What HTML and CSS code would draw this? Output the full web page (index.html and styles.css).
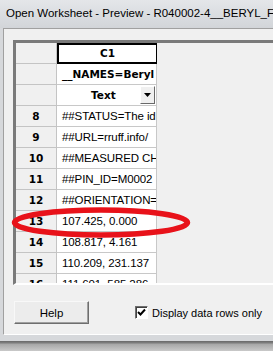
FILE: index.html
```html
<!DOCTYPE html>
<html lang="en">
<head>
    <meta charset="UTF-8">
    <title>Open Worksheet - Preview</title>
    <link rel="stylesheet" href="styles.css">
</head>
<body>

    <div class="window">
        <div class="titlebar">Open Worksheet - Preview - R040002-4__BERYL_F</div>

        <div class="frame">
            <div class="client">

                <!-- Предпросмотр листа -->
                <div class="grid-panel">
                    <div class="row">
                        <div class="rh"></div>
                        <div class="cell col-name">C1</div>
                    </div>
                    <div class="row">
                        <div class="rh"></div>
                        <div class="cell col-head">__NAMES=Beryl</div>
                    </div>
                    <div class="row">
                        <div class="rh"></div>
                        <div class="cell col-type">
                            <span>Text</span>
                            <span class="drop"><svg width="7" height="4" viewBox="0 0 7 4"><path d="M0 0h7L3.5 4z" fill="#000"/></svg></span>
                        </div>
                    </div>
                    <div class="row"><div class="rh">8</div><div class="cell">##STATUS=The id</div></div>
                    <div class="row"><div class="rh">9</div><div class="cell">##URL=rruff.info/</div></div>
                    <div class="row"><div class="rh">10</div><div class="cell">##MEASURED CHE</div></div>
                    <div class="row"><div class="rh">11</div><div class="cell">##PIN_ID=M0002</div></div>
                    <div class="row"><div class="rh">12</div><div class="cell">##ORIENTATION=</div></div>
                    <div class="row"><div class="rh">13</div><div class="cell">107.425, 0.000</div></div>
                    <div class="row"><div class="rh">14</div><div class="cell">108.817, 4.161</div></div>
                    <div class="row"><div class="rh">15</div><div class="cell">110.209, 231.137</div></div>
                    <div class="row"><div class="rh">16</div><div class="cell">111.601, 585.286</div></div>
                </div>

                <div class="actions">
                    <button class="btn">Help</button>
                    <label class="check">
                        <span class="box"><svg width="9" height="9" viewBox="0 0 9 9"><path d="M1 4l2.5 2.5L8 1.5" fill="none" stroke="#000" stroke-width="2"/></svg></span>
                        Display data rows only
                    </label>
                </div>

            </div>
        </div>
    </div>

    <!-- Красный овал поверх строки 13 -->
    <svg class="mark" width="273" height="351">
        <ellipse cx="101" cy="222.5" rx="86.5" ry="12.5" fill="none" stroke="#e8121a" stroke-width="5.5"/>
    </svg>

</body>
</html>
```

FILE: styles.css
```css
body {
    margin: 0;
    width: 273px;
    height: 351px;
    overflow: hidden;
    position: relative;
    background: linear-gradient(#7a7a7a 0, #7a7a7a 343px, #a6a6a6 344px, #c9c9c9 351px);
    font-family: "Liberation Sans", Arial, sans-serif;
}
.window {
    width: 320px;
}
.titlebar {
    height: 28px;
    line-height: 27px;
    padding-left: 6px;
    font-size: 11.5px;
    color: #000;
    white-space: nowrap;
    overflow: hidden;
    background: linear-gradient(#e4e6e9, #d2d5d9);
}
.frame {
    padding: 0 0 6px 3px;
    background: #d6d8db;
    border-bottom: 1px solid #6e6e6e;
}
.client {
    height: 307px;
    background: #f0f0f0;
    border-top: 1px solid #a0a0a0;
    border-left: 1px solid #a0a0a0;
    border-bottom: 1px solid #fff;
    box-sizing: border-box;
    padding: 11px 0 0 9px;
}

/* Таблица */
.grid-panel {
    height: 245px;
    box-sizing: border-box;
    overflow: hidden;
    border-top: 3px solid #7a7a7a;
    border-left: 3px solid #7a7a7a;
    border-bottom: 2px solid #fff;
    background: #f0f0f0;
}
.row {
    display: flex;
    height: 21px;
}
.rh {
    width: 41px;
    box-sizing: border-box;
    border-right: 1px solid #c4c4c4;
    border-bottom: 1px solid #c4c4c4;
    background: #f0f0f0;
    text-align: center;
    line-height: 20px;
    font-family: "DejaVu Sans", sans-serif;
    font-weight: bold;
    font-size: 10.5px;
}
.cell {
    width: 100px;
    box-sizing: border-box;
    border-right: 1px solid #c8c8c8;
    border-bottom: 1px solid #c8c8c8;
    background: #fff;
    padding-left: 5px;
    line-height: 20px;
    font-size: 11.5px;
    letter-spacing: -0.1px;
    white-space: nowrap;
    overflow: hidden;
}
.col-name {
    border: 2px solid #000;
    border-right-width: 1px;
    text-align: center;
    padding: 0;
    line-height: 17px;
    font-family: "DejaVu Sans", sans-serif;
    font-weight: bold;
    font-size: 10.5px;
}
.col-head,
.col-type {
    font-family: "DejaVu Sans", sans-serif;
    font-weight: bold;
    font-size: 10.5px;
    letter-spacing: 0;
}
.col-type {
    display: flex;
    justify-content: space-between;
    align-items: center;
    padding: 0 0 0 34px;
}
.drop {
    width: 15px;
    height: 18px;
    box-sizing: border-box;
    background: #f0f0f0;
    border: 1px solid;
    border-color: #fff #696969 #696969 #fff;
    display: flex;
    align-items: center;
    justify-content: center;
    margin-right: 1px;
}
.drop svg {
    display: block;
}

/* Нижняя панель */
.actions {
    display: flex;
    align-items: center;
    margin-top: 16px;
}
.btn {
    width: 75px;
    height: 23px;
    margin-left: 1px;
    box-sizing: border-box;
    border: 1px solid;
    border-color: #f8f8f8 #6e6e6e #6e6e6e #f8f8f8;
    box-shadow: inset -1px -1px 0 #a0a0a0;
    background: #ececec;
    font-family: "Liberation Sans", Arial, sans-serif;
    font-size: 11.5px;
    padding: 0;
}
.check {
    display: flex;
    align-items: center;
    margin-left: 46px;
    font-size: 11px;
}
.box {
    width: 13px;
    height: 13px;
    box-sizing: border-box;
    background: #fff;
    border: 1px solid;
    border-color: #6e6e6e #fff #fff #6e6e6e;
    box-shadow: inset 1px 1px 0 #404040;
    display: flex;
    align-items: center;
    justify-content: center;
    margin-right: 4px;
}

.mark {
    position: absolute;
    left: 0;
    top: 0;
    pointer-events: none;
}
```
